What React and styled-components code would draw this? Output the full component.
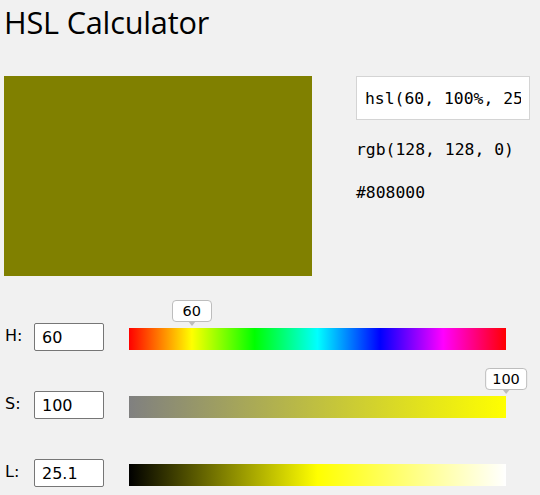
import React from "react";
import styled, { createGlobalStyle } from "styled-components";

const Global = createGlobalStyle`
  html, body { margin: 0; padding: 0; background: #f1f1f1; }
  body { font-family: "Noto Sans", "Open Sans", sans-serif; color: #000; }
`;

const Page = styled.div`
  width: 540px;
  height: 495px;
  overflow: hidden;
  padding: 0 0 0 4px;
  box-sizing: border-box;
`;

const Title = styled.h1`
  margin: 0 0 32px 0;
  font-family: "Open Sans", "Noto Sans", sans-serif;
  font-weight: 400;
  font-size: 30.7px;
  line-height: 44px;
  letter-spacing: -0.2px;
`;

const Top = styled.div`
  display: flex;
  gap: 44px;
`;

const Swatch = styled.div`
  width: 308px;
  height: 200px;
  background: ${(p) => p.$color};
`;

const Info = styled.div`
  display: flex;
  flex-direction: column;
`;

const CodeInput = styled.input`
  width: 174px;
  height: 44px;
  box-sizing: border-box;
  border: 1px solid #d4d4d4;
  background: #fff;
  padding: 0 8px;
  font-family: "DejaVu Sans Mono", "Liberation Mono", monospace;
  font-size: 16.4px;
  color: #000;
  outline: none;
`;

const CodeLine = styled.div`
  font-family: "DejaVu Sans Mono", "Liberation Mono", monospace;
  font-size: 16.4px;
  line-height: 22px;
  margin-top: ${(p) => p.$top}px;
`;

const Sliders = styled.div`
  margin-top: 47px;
  display: flex;
  flex-direction: column;
  gap: 40px;
`;

const Row = styled.div`
  display: flex;
  align-items: center;
  height: 28px;
`;

const Label = styled.label`
  width: 30px;
  box-sizing: border-box;
  padding-left: 1px;
  font-family: "DejaVu Sans", sans-serif;
  font-size: 16px;
  margin-top: -4px;
`;

const NumInput = styled.input`
  width: 70px;
  height: 28px;
  box-sizing: border-box;
  border: 1px solid #767676;
  border-radius: 2px;
  background: #fff;
  padding: 0 7px;
  font-family: "DejaVu Sans", sans-serif;
  font-size: 16px;
  color: #000;
  outline: none;
`;

const TrackWrap = styled.div`
  position: relative;
  margin-left: 25px;
  margin-top: 4px;
  width: 377px;
  height: 22px;
`;

const Track = styled.div`
  width: 100%;
  height: 100%;
  background: ${(p) => p.$gradient};
`;

const Tip = styled.div`
  position: absolute;
  bottom: 28px;
  transform: translateX(-50%);
  min-width: 40px;
  height: 22px;
  box-sizing: border-box;
  padding: 0 6px;
  background: #fff;
  border: 1px solid #bdbdbd;
  border-radius: 4px;
  font-family: "DejaVu Sans", sans-serif;
  font-size: 14.5px;
  line-height: 20px;
  text-align: center;
  &::after {
    content: "";
    position: absolute;
    left: 50%;
    top: 100%;
    margin-left: -4px;
    border-left: 4px solid transparent;
    border-right: 4px solid transparent;
    border-top: 5px solid #bdbdbd;
  }
`;

const h = 60, s = 100, l = 25.1;

const sliders = [
  {
    key: "H",
    value: "60",
    pos: h / 360,
    tip: true,
    gradient:
      "linear-gradient(to right, #f00 0%, #ff0 16.67%, #0f0 33.33%, #0ff 50%, #00f 66.67%, #f0f 83.33%, #f00 100%)",
  },
  {
    key: "S",
    value: "100",
    pos: s / 100,
    tip: true,
    gradient: "linear-gradient(to right, #808080, #ffff00)",
  },
  {
    key: "L",
    value: "25.1",
    pos: l / 100,
    tip: false,
    gradient: "linear-gradient(to right, #000, #ffff00 50%, #fff)",
  },
];

export default function App() {
  return (
    <Page>
      <Global />
      <Title>HSL Calculator</Title>
      <Top>
        <Swatch $color="#808000" />
        <Info>
          <CodeInput readOnly value="hsl(60, 100%, 25.1%)" />
          <CodeLine $top={19}>rgb(128, 128, 0)</CodeLine>
          <CodeLine $top={21}>#808000</CodeLine>
        </Info>
      </Top>
      <Sliders>
        {sliders.map((sl) => (
          <Row key={sl.key}>
            <Label>{sl.key}:</Label>
            <NumInput readOnly value={sl.value} />
            <TrackWrap>
              <Track $gradient={sl.gradient} />
              {sl.tip && (
                <Tip style={{ left: `${sl.pos * 100}%` }}>{sl.value}</Tip>
              )}
            </TrackWrap>
          </Row>
        ))}
      </Sliders>
    </Page>
  );
}
